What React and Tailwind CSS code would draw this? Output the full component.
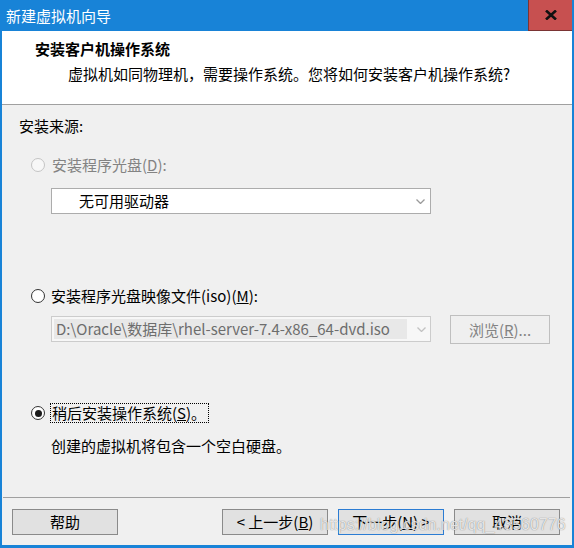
const Radio = ({ checked, disabled }) => (
	<span
		className={`w-[14px] h-[14px] rounded-full border flex items-center justify-center shrink-0 ${
			disabled ? 'border-[#c4c4c4] bg-[#f7f7f7]' : 'border-[#333333] bg-white'
		}`}
	>
		{checked && <span className="w-[7px] h-[7px] rounded-full bg-[#1a1a1a]" />}
	</span>
)

const Chevron = ({ color }) => (
	<svg width="9" height="5" viewBox="0 0 9 5" fill="none">
		<path d="M0.5 0.5 L4.5 4.5 L8.5 0.5" stroke={color} strokeWidth="1.3" />
	</svg>
)

const Button = ({ children, primary }) => (
	<button
		className={`w-[106px] h-[26px] bg-[#e1e1e1] border flex items-center justify-center ${
			primary ? 'border-[#2b7cd3]' : 'border-[#8a8a8a]'
		}`}
	>
		{children}
	</button>
)

export default function App() {
	return (
		<div className="relative w-[574px] h-[548px] bg-[#1883d7] flex flex-col px-[2px] pb-[3px] font-['Noto_Sans_CJK_SC',sans-serif] text-[15px] leading-[20px] text-black">
			{/* title bar */}
			<div className="h-[31px] flex items-center justify-between shrink-0">
				<span className="pl-[4px] text-white">新建虚拟机向导</span>
				<div className="w-[44px] h-[31px] bg-[#c75050] border-l border-b border-[#7a3434] flex items-center justify-center">
					<svg width="12" height="10" viewBox="0 0 12 10">
						<path d="M1 0.5 L11 9.5 M11 0.5 L1 9.5" stroke="#111" strokeWidth="2.6" />
					</svg>
				</div>
			</div>

			<div className="flex-1 flex flex-col bg-[#f0f0f0]">
				{/* header */}
				<div className="h-[74px] shrink-0 bg-white border-b border-[#a0a0a0] pt-[8px]">
					<div className="ml-[33px] font-bold">安装客户机操作系统</div>
					<div className="ml-[66px] mt-[5px]">虚拟机如同物理机，需要操作系统。您将如何安装客户机操作系统?</div>
				</div>

				{/* body */}
				<div className="flex-1 flex flex-col pt-[11px]">
					<div className="ml-[17px]">安装来源:</div>

					<div className="ml-[29px] mt-[19px] flex items-center gap-[7px] text-[#838383]">
						<Radio disabled />
						<span>
							安装程序光盘(<span className="underline">D</span>):
						</span>
					</div>
					<div className="ml-[49px] mt-[13px] w-[380px] h-[26px] bg-white border border-[#acacac] flex items-center justify-between pl-[27px] pr-[5px]">
						<span>无可用驱动器</span>
						<Chevron color="#9a9a9a" />
					</div>

					<div className="ml-[29px] mt-[72px] flex items-center gap-[6px]">
						<Radio />
						<span>
							安装程序光盘映像文件(iso)(<span className="underline">M</span>):
						</span>
					</div>
					<div className="ml-[49px] mt-[9px] flex items-start gap-[19px]">
						<div className="mt-[1px] w-[380px] h-[26px] bg-[#f7f7f7] border border-[#cccccc] flex items-center p-[2px] pr-[4px]">
							<div className="w-[353px] h-full bg-[#e8e8e8] text-[#6d6d6d] pl-[2px] flex items-center whitespace-nowrap">
								D:\Oracle\数据库\rhel-server-7.4-x86_64-dvd.iso
							</div>
							<div className="flex-1 flex justify-end">
								<Chevron color="#c2c2c2" />
							</div>
						</div>
						<div className="w-[100px] h-[29px] bg-[#efefef] border border-[#bfbfbf] text-[#838383] flex items-center justify-center">
							浏览(<span className="underline">R</span>)...
						</div>
					</div>

					<div className="ml-[29px] mt-[59px] flex items-center gap-[5px]">
						<Radio checked />
						<span className="border border-dotted border-black leading-[18px] pl-[1px] pr-[2px]">
							稍后安装操作系统(<span className="underline">S</span>)。
						</span>
					</div>
					<div className="ml-[49px] mt-[13px]">创建的虚拟机将包含一个空白硬盘。</div>
				</div>

				{/* footer */}
				<div className="ml-[1px] mr-[2px] border-t border-[#a0a0a0]" />
				<div className="flex items-center pt-[11px] pb-[10px] pl-[10px] pr-[12px]">
					<Button>帮助</Button>
					<div className="flex-1" />
					<div className="flex gap-[10px]">
						<Button>
							&lt; 上一步(<span className="underline">B</span>)
						</Button>
						<Button primary>
							下一步(<span className="underline">N</span>) &gt;
						</Button>
						<Button>取消</Button>
					</div>
				</div>
			</div>

			{/* watermark */}
			<div className="absolute left-[320px] top-[516px] font-['Liberation_Sans',sans-serif] text-[16px] leading-[18px] text-white/80 whitespace-nowrap pointer-events-none [text-shadow:0_0_1px_rgba(0,0,0,0.55)]">
				https://blog.csdn.net/qq_43560776
			</div>
		</div>
	)
}
